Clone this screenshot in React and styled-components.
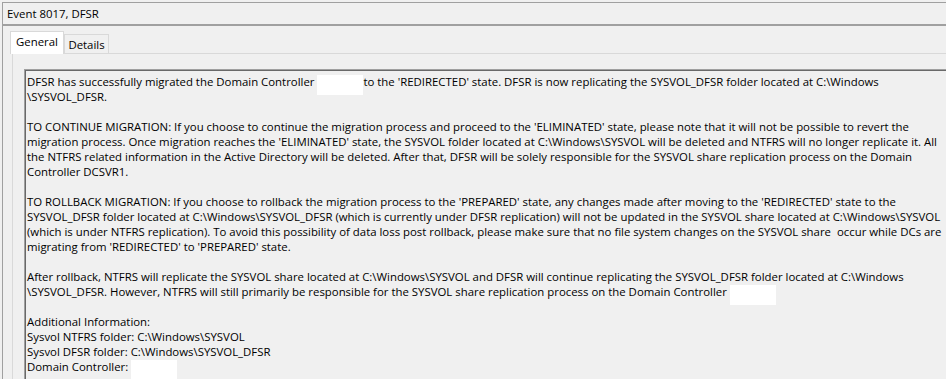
import React from "react";
import styled, { createGlobalStyle } from "styled-components";

const GlobalStyle = createGlobalStyle`
  html, body {
    margin: 0;
    padding: 0;
    height: 100%;
    overflow: hidden;
    background: #f0f0f0;
  }
  body {
    font-family: "Open Sans", "Noto Sans", sans-serif;
    font-size: 11.4px;
    color: #000;
  }
`;

const Window = styled.div`
  height: 100vh;
  padding: 2px 0 0 2px;
  box-sizing: border-box;
`;

const Frame = styled.div`
  height: 100%;
  display: flex;
  flex-direction: column;
  border-top: 1px solid #a0a0a0;
  border-left: 1px solid #a0a0a0;
`;

const TitleBar = styled.div`
  height: 21px;
  padding-left: 4px;
  display: flex;
  align-items: center;
  border-bottom: 2px solid #a0a0a0;
`;

const TabArea = styled.div`
  flex: 1;
  display: flex;
  flex-direction: column;
  padding: 6px 0 0 9px;
`;

const TabRow = styled.div`
  display: flex;
  align-items: flex-end;
  height: 22px;
  position: relative;
  z-index: 1;
  margin-bottom: -1px;
`;

const Tab = styled.div`
  box-sizing: border-box;
  display: flex;
  justify-content: center;
  align-items: center;
  width: ${(p) => p.$w}px;
  height: ${(p) => (p.$active ? 23 : 20)}px;
  margin-left: ${(p) => (p.$active ? -2 : 0)}px;
  background: ${(p) => (p.$active ? "#fff" : "#f0f0f0")};
  border: 1px solid #d9d9d9;
  border-bottom: ${(p) => (p.$active ? "none" : "1px solid #d9d9d9")};
  padding-top: ${(p) => (p.$active ? 0 : 1)}px;
  padding-bottom: ${(p) => (p.$active ? 3 : 0)}px;
`;

const Panel = styled.div`
  flex: 1;
  display: flex;
  border-top: 1px solid #d9d9d9;
  border-left: 1px solid #d9d9d9;
  padding: 15px 0 0 11px;
`;

const TextBox = styled.div`
  flex: 1;
  border-top: 1px solid #a0a0a0;
  border-left: 1px solid #a0a0a0;
  box-shadow: inset 1px 1px 0 #696969;
  padding: 4px 0 0 2px;
  line-height: 15px;
`;

const Line = styled.div`
  white-space: pre;
  height: 15px;
`;

const Redacted = styled.span`
  display: inline-block;
  width: 46px;
  height: 20px;
  margin: 1px 0 -6px;
  vertical-align: top;
  background: #fff;
`;

const R = "{R}";

const lines = [
  `DFSR has successfully migrated the Domain Controller ${R}to the 'REDIRECTED' state. DFSR is now replicating the SYSVOL_DFSR folder located at C:\\Windows`,
  `\\SYSVOL_DFSR.`,
  ``,
  `TO CONTINUE MIGRATION: If you choose to continue the migration process and proceed to the 'ELIMINATED' state, please note that it will not be possible to revert the`,
  `migration process. Once migration reaches the 'ELIMINATED' state, the SYSVOL folder located at C:\\Windows\\SYSVOL will be deleted and NTFRS will no longer replicate it. All`,
  `the NTFRS related information in the Active Directory will be deleted. After that, DFSR will be solely responsible for the SYSVOL share replication process on the Domain`,
  `Controller DCSVR1.`,
  ``,
  `TO ROLLBACK MIGRATION: If you choose to rollback the migration process to the 'PREPARED' state, any changes made after moving to the 'REDIRECTED' state to the`,
  `SYSVOL_DFSR folder located at C:\\Windows\\SYSVOL_DFSR (which is currently under DFSR replication) will not be updated in the SYSVOL share located at C:\\Windows\\SYSVOL`,
  `(which is under NTFRS replication). To avoid this possibility of data loss post rollback, please make sure that no file system changes on the SYSVOL share  occur while DCs are`,
  `migrating from 'REDIRECTED' to 'PREPARED' state.`,
  ``,
  `After rollback, NTFRS will replicate the SYSVOL share located at C:\\Windows\\SYSVOL and DFSR will continue replicating the SYSVOL_DFSR folder located at C:\\Windows`,
  `\\SYSVOL_DFSR. However, NTFRS will still primarily be responsible for the SYSVOL share replication process on the Domain Controller ${R}`,
  ``,
  `Additional Information:`,
  `Sysvol NTFRS folder: C:\\Windows\\SYSVOL`,
  `Sysvol DFSR folder: C:\\Windows\\SYSVOL_DFSR`,
  `Domain Controller: ${R}`,
];

const renderLine = (text) => {
  const parts = text.split(R);
  return parts.map((part, i) => (
    <React.Fragment key={i}>
      {part}
      {i < parts.length - 1 && <Redacted />}
    </React.Fragment>
  ));
};

const App = () => {
  return (
    <>
      <GlobalStyle />
      <Window>
        <Frame>
          <TitleBar>Event 8017, DFSR</TitleBar>
          <TabArea>
            <TabRow>
              <Tab $active $w={54}>General</Tab>
              <Tab $w={45}>Details</Tab>
            </TabRow>
            <Panel>
              <TextBox>
                {lines.map((line, i) => (
                  <Line key={i}>{renderLine(line)}</Line>
                ))}
              </TextBox>
            </Panel>
          </TabArea>
        </Frame>
      </Window>
    </>
  );
};

export default App;
